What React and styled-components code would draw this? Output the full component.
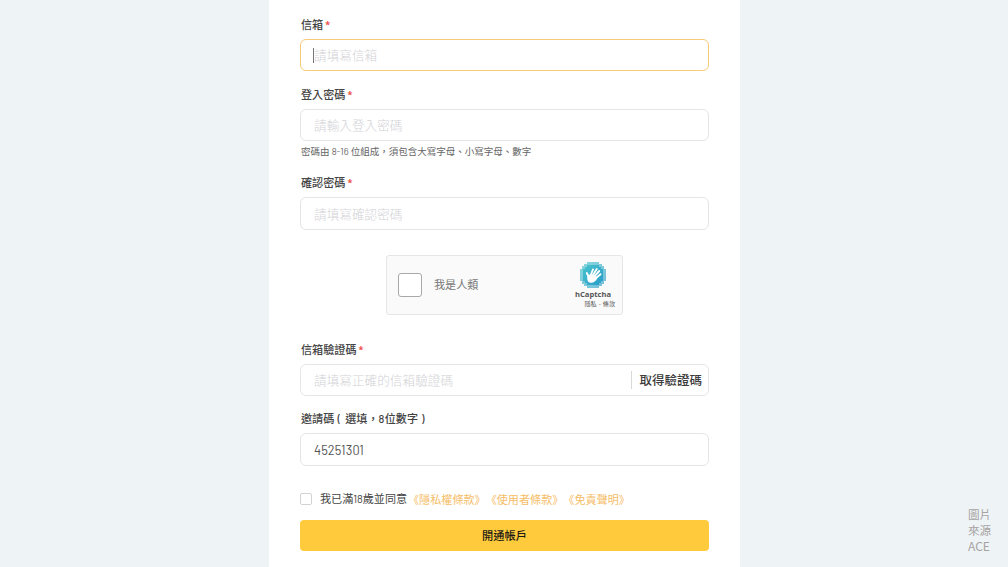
import React from 'react';
import styled, {createGlobalStyle} from 'styled-components';

const GlobalStyle = createGlobalStyle`
  * {
    box-sizing: border-box;
  }
  body {
    margin: 0;
    overflow: hidden;
    background-color: #eef3f6;
    font-family: "Noto Sans CJK TC", sans-serif;
    color: #444;
  }
`;

const Page = styled.div`
  position: relative;
  display: flex;
  justify-content: center;
  height: 567px;
`;

const Card = styled.form`
  width: 471px;
  height: 567px;
  margin-left: 1px;
  padding: 16px 31px 0;
  background-color: #fff;
`;

const Field = styled.div`
  margin-bottom: ${({gap}) => gap}px;
`;

const Label = styled.label`
  display: flex;
  height: 16px;
  margin: 0 0 7px 1px;
  font-size: 11.1px;
  font-weight: 500;
  line-height: 17px;
  white-space: pre;
`;

const Required = styled.span`
  margin-left: 2px;
  font-family: "Noto Sans", sans-serif;
  font-size: 9px;
  font-weight: 700;
  line-height: 18px;
  color: #ee4b43;
`;

const InputBox = styled.div`
  display: flex;
  align-items: center;
  height: ${({height}) => height || 33}px;
  padding: 0 0 1px 13px;
  border: 1px solid ${({active}) => (active ? '#f8cb78' : '#e5e5e7')};
  border-radius: 6px;
  background-color: #fff;
`;

const Caret = styled.span`
  width: 1px;
  height: 15px;
  margin: 1px 0 0 -1px;
  background-color: #777;
`;

const Placeholder = styled.span`
  flex: 1;
  padding-top: 1px;
  font-size: 12.65px;
  font-weight: 300;
  line-height: 18px;
  color: #d2d2d6;
`;

const Value = styled.span`
  padding-top: 1px;
  font-family: Barlow, Roboto, sans-serif;
  font-size: 12.8px;
  letter-spacing: 0.1px;
  line-height: 18px;
  color: #555;
`;

const SendCode = styled.button`
  height: 18px;
  padding: 0 6px 0 7px;
  border: 0;
  border-left: 1px solid #d9d9dc;
  background: none;
  font-family: inherit;
  font-size: 12.5px;
  font-weight: 500;
  line-height: 17px;
  color: #3c3c3c;
`;

const Hint = styled.p`
  height: 14px;
  margin: 3px 0 1px 1px;
  font-size: 9.5px;
  line-height: 14px;
  color: #666;
  white-space: nowrap;
`;

const Narrow = styled.span`
  font-family: Barlow, Roboto, sans-serif;
  font-size: ${({size}) => size}px;
  letter-spacing: ${({spacing}) => spacing}px;
`;

const Captcha = styled.div`
  display: flex;
  align-items: center;
  width: 237px;
  height: 60px;
  margin: 0 auto 26px;
  padding: 0 7px 0 11px;
  border: 1px solid #e6e6e6;
  border-radius: 3px;
  background-color: #fafafa;
`;

const CaptchaBox = styled.span`
  width: 24px;
  height: 24px;
  border: 1px solid #a8a8a8;
  border-radius: 3px;
  background-color: #fff;
`;

const CaptchaText = styled.span`
  flex: 1;
  margin: 0 0 2px 12px;
  font-size: 11.1px;
  color: #777;
`;

const CaptchaBrand = styled.div`
  display: flex;
  flex-direction: column;
  align-items: flex-end;
  height: 58px;
  padding-top: 6px;
`;

const BrandName = styled.span`
  margin: 1px 4px 0 0;
  font-family: "Open Sans", "Noto Sans", sans-serif;
  font-size: 7.6px;
  font-weight: 700;
  line-height: 10px;
  color: #555;
`;

const BrandLinks = styled.span`
  font-size: 6.1px;
  line-height: 9px;
  color: #555;
  white-space: pre;
  word-spacing: 0.7px;
`;

const Agreement = styled.div`
  display: flex;
  align-items: center;
  height: 18px;
  margin-bottom: 12px;
  font-size: 11.1px;
  line-height: 16px;
  white-space: nowrap;
`;

const AgreementText = styled.span`
  width: 88px;
  padding-bottom: 1px;
`;

const CheckBox = styled.span`
  width: 12px;
  height: 12px;
  margin-right: 8px;
  border: 1px solid #d3d3d3;
  border-radius: 2px;
`;

const Link = styled.a`
  padding-bottom: 1px;
  color: #f5bd67;
`;

const Submit = styled.button`
  display: block;
  width: 100%;
  height: 31px;
  padding: 0 0 2px;
  border: 0;
  border-radius: 4px;
  background-color: #ffcb3c;
  font-family: inherit;
  font-size: 11.2px;
  font-weight: 500;
  color: #1c1a14;
`;

const Source = styled.div`
  position: absolute;
  top: 507px;
  left: 968px;
  width: 24px;
  font-size: 11.6px;
  line-height: 15.6px;
  color: #a6a3a2;
`;

const Latin = styled.span`
  font-size: 12px;
`;

const HandLogo = () => (
    <svg width="26" height="26" viewBox="0 0 26 26" style={{marginRight: 9}}>
        <defs>
            <linearGradient id="tiles" x1="0" y1="0" x2="1" y2="1">
                <stop offset="0" stopColor="#48c4cd"/>
                <stop offset="1" stopColor="#2a9bc8"/>
            </linearGradient>
        </defs>
        <path fill="url(#tiles)" opacity=".65" d="M7 0h12v2h3v2h2v3h2v12h-2v3h-2v2h-3v2H7v-2H4v-2H2v-3H0V7h2V4h2V2h3z"/>
        <path fill="url(#tiles)" d="M7 3h12v2h2v2h2v12h-2v2h-2v2H7v-2H5v-2H3V7h2V5h2z"/>
        <path
            fill="none"
            stroke="#fff"
            strokeWidth="1.9"
            strokeLinecap="round"
            d="M8.500 14.500L6.800 11M10.500 13.500l2.500-6M12.500 13.800l4.300-6.800M14.200 14.700L19.200 9M15.500 16.500l5-4.300"
        />
        <path fill="#fff" d="M7.800 12.500l3 .5 5 1 1.400 2.200c-1.500 3-3.600 4.900-6.700 4.600C7.400 20.400 6.500 17.500 7.800 12.500z"/>
    </svg>
);

const TextField = ({label, required, placeholder, active, height, hint, gap, children}) => (
    <Field gap={gap}>
        <Label>{label}{required ? <Required>*</Required> : null}</Label>
        <InputBox active={active} height={height}>
            {active ? <Caret/> : null}
            {placeholder ? <Placeholder>{placeholder}</Placeholder> : null}
            {children}
        </InputBox>
        {hint ? <Hint>{hint}</Hint> : null}
    </Field>
);

export default () => (
    <Page>
        <GlobalStyle/>
        <Card>
            <TextField label="信箱" required active height={32} placeholder="請填寫信箱" gap={15}/>
            <TextField
                label="登入密碼"
                required
                height={32}
                placeholder="請輸入登入密碼"
                hint={<>密碼由 <Narrow size={9.5} spacing={0}>8-16</Narrow> 位組成，須包含大寫字母、小寫字母、數字</>}
                gap={16}
            />
            <TextField label="確認密碼" required placeholder="請填寫確認密碼" gap={25}/>
            <Captcha>
                <CaptchaBox/>
                <CaptchaText>我是人類</CaptchaText>
                <CaptchaBrand>
                    <HandLogo/>
                    <BrandName>hCaptcha</BrandName>
                    <BrandLinks>隱私 - 條款</BrandLinks>
                </CaptchaBrand>
            </Captcha>
            <TextField label="信箱驗證碼" required height={32} placeholder="請填寫正確的信箱驗證碼" gap={14}>
                <SendCode type="button">取得驗證碼</SendCode>
            </TextField>
            <TextField
                label={<>邀請碼<Narrow size={11} spacing={1.1}> ( </Narrow>選填，<Narrow size={11} spacing={0.4}>8</Narrow>位數字<Narrow size={11} spacing={1.1}> )</Narrow></>}
                gap={24}
            >
                <Value>45251301</Value>
            </TextField>
            <Agreement>
                <CheckBox/>
                <AgreementText>我已滿<Narrow size={11} spacing={-0.1}>18</Narrow>歲並同意</AgreementText>
                <Link>《隱私權條款》</Link>
                <Link>《使用者條款》</Link>
                <Link>《免責聲明》</Link>
            </Agreement>
            <Submit type="button">開通帳戶</Submit>
        </Card>
        <Source>圖片來源<Latin>ACE</Latin></Source>
    </Page>
);
